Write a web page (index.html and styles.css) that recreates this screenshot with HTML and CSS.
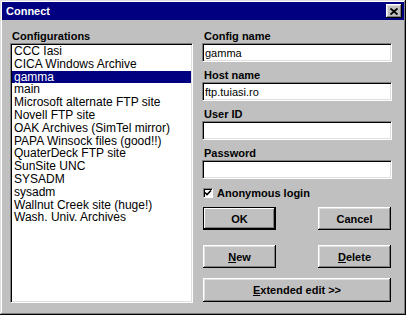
FILE: index.html
```html
<!DOCTYPE html>
<html lang="en">
<head>
    <meta charset="UTF-8">
    <title>Connect</title>
    <link rel="stylesheet" href="styles.css">
</head>
<body>
    <div class="window">
        <div class="titlebar">
            <span class="title">Connect</span>
            <button class="close" aria-label="Close">
                <svg width="8" height="7" viewBox="0 0 8 7">
                    <path d="M0.5 0.5 L7.5 6.5 M7.5 0.5 L0.5 6.5" stroke="#000" stroke-width="1.8" fill="none"/>
                </svg>
            </button>
        </div>

        <div class="content">
            <div class="left-col">
                <div class="label">Configurations</div>
                <ul class="listbox">
                    <li>CCC Iasi</li>
                    <li>CICA Windows Archive</li>
                    <li class="selected">gamma</li>
                    <li>main</li>
                    <li>Microsoft alternate FTP site</li>
                    <li>Novell FTP site</li>
                    <li>OAK Archives (SimTel mirror)</li>
                    <li>PAPA Winsock files (good!!)</li>
                    <li>QuaterDeck FTP site</li>
                    <li>SunSite UNC</li>
                    <li>SYSADM</li>
                    <li>sysadm</li>
                    <li>Wallnut Creek site (huge!)</li>
                    <li>Wash. Univ. Archives</li>
                </ul>
            </div>

            <div class="right-col">
                <div class="field">
                    <div class="label">Config name</div>
                    <input class="textbox" type="text" value="gamma">
                </div>
                <div class="field">
                    <div class="label">Host name</div>
                    <input class="textbox" type="text" value="ftp.tuiasi.ro">
                </div>
                <div class="field">
                    <div class="label">User ID</div>
                    <input class="textbox" type="text" value="">
                </div>
                <div class="field">
                    <div class="label">Password</div>
                    <input class="textbox" type="password" value="">
                </div>

                <label class="checkbox-row">
                    <span class="checkbox">
                        <svg width="8" height="8" viewBox="0 0 8 8">
                            <path d="M1 3.5 L3 5.5 L7 1.5" stroke="#000" stroke-width="1.6" fill="none"/>
                        </svg>
                    </span>
                    Anonymous login
                </label>

                <div class="btn-row btn-row-ok">
                    <button class="btn btn-default">OK</button>
                    <button class="btn">Cancel</button>
                </div>
                <div class="btn-row btn-row-new">
                    <button class="btn"><u>N</u>ew</button>
                    <button class="btn"><u>D</u>elete</button>
                </div>
                <button class="btn btn-wide"><u>E</u>xtended edit &gt;&gt;</button>
            </div>
        </div>
    </div>
</body>
</html>
```

FILE: styles.css
```css
* {
    margin: 0;
    padding: 0;
    box-sizing: border-box;
    font-family: 'Liberation Sans', Arial, sans-serif;
}

body {
    background: #c0c0c0;
}

.window {
    width: 406px;
    height: 315px;
    padding: 2px;
    background: #c0c0c0;
    box-shadow:
        inset -1px -1px #000,
        inset 1px 1px #dfdfdf,
        inset -2px -2px #808080,
        inset 2px 2px #fff;
}

.titlebar {
    height: 18px;
    display: flex;
    align-items: center;
    justify-content: space-between;
    padding: 0 2px 0 4px;
    background: #000080;
    color: #fff;
}

.title {
    font-size: 11px;
    font-weight: bold;
}

.close {
    width: 16px;
    height: 14px;
    display: flex;
    align-items: center;
    justify-content: center;
    background: #c0c0c0;
    border: none;
    box-shadow:
        inset -1px -1px #000,
        inset 1px 1px #fff,
        inset -2px -2px #808080,
        inset 2px 2px #dfdfdf;
}

.content {
    display: flex;
    padding: 10px 10px 0 8px;
}

.label {
    font-size: 11px;
    font-weight: bold;
    line-height: 13px;
    padding-left: 2px;
    color: #000;
}

.left-col {
    width: 183px;
}

.listbox {
    list-style: none;
    height: 260px;
    padding: 1px 0;
    background: #fff;
    border: 1px solid;
    border-color: #808080 #fff #fff #808080;
    box-shadow: inset 1px 1px #000, inset -1px -1px #dfdfdf;
}

.listbox li {
    font-size: 12px;
    line-height: 12.8px;
    height: 12.8px;
    padding-left: 2px;
    margin: 0 1px;
    white-space: nowrap;
    color: #000;
}

.listbox li.selected {
    background: #000080;
    color: #fff;
}

.right-col {
    width: 190px;
    margin-left: 9px;
}

.field {
    margin-bottom: 7px;
}

.textbox {
    display: block;
    width: 100%;
    height: 19px;
    padding: 0 2px;
    font-size: 11px;
    color: #000;
    background: #fff;
    border: 1px solid;
    border-color: #808080 #fff #fff #808080;
    box-shadow: inset 1px 1px #000, inset -1px -1px #dfdfdf;
    outline: none;
}

.checkbox-row {
    display: flex;
    align-items: center;
    gap: 4px;
    height: 14px;
    padding-left: 1px;
    font-size: 11px;
    font-weight: bold;
}

.checkbox {
    width: 10px;
    height: 10px;
    display: flex;
    align-items: center;
    justify-content: center;
    background: #fff;
    border: 1px solid;
    border-color: #808080 #fff #fff #808080;
    box-shadow: inset 1px 1px #000;
}

.btn-row {
    display: flex;
    justify-content: space-between;
    padding: 0 1px;
}

.btn-row-ok {
    margin-top: 7px;
}

.btn-row-new {
    margin-top: 15px;
}

.btn {
    width: 73px;
    height: 23px;
    font-size: 11px;
    font-weight: bold;
    color: #000;
    background: #c0c0c0;
    border: none;
    box-shadow:
        inset -1px -1px #000,
        inset 1px 1px #fff,
        inset -2px -2px #808080,
        inset 2px 2px #dfdfdf;
}

.btn-default {
    box-shadow:
        inset 0 0 0 1px #000,
        inset -2px -2px #000,
        inset 2px 2px #fff,
        inset -3px -3px #808080;
}

.btn-wide {
    display: block;
    width: 188px;
    height: 24px;
    margin: 10px 0 0 1px;
}
```
